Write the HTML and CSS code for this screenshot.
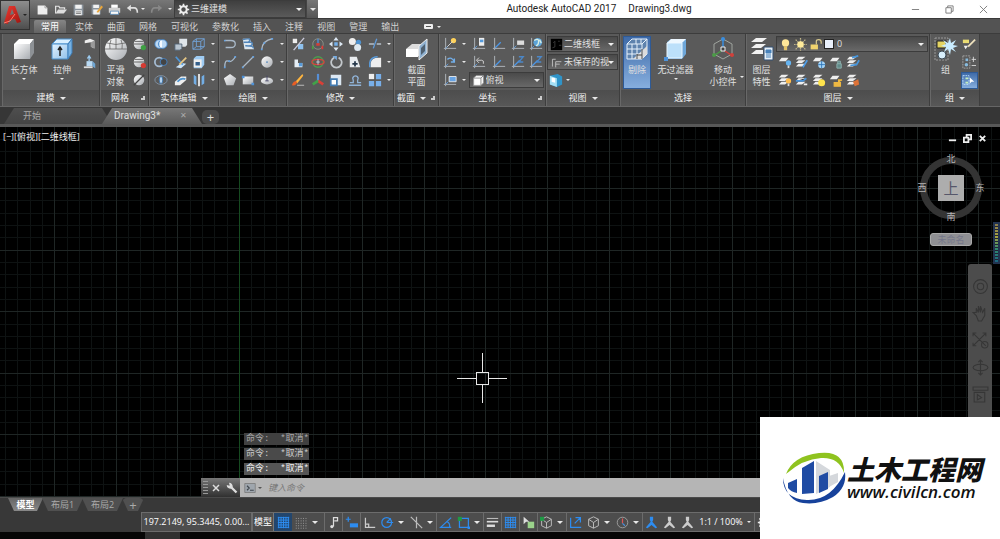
FILE: index.html
```html
<!DOCTYPE html>
<html lang="zh-CN">
  <head>
    <meta charset="UTF-8" />
    <meta name="viewport" content="width=device-width, initial-scale=1.0" />
    <title>Autodesk AutoCAD 2017</title>
    <link rel="stylesheet" href="styles.css">
  </head>
  <body>
    <svg class="defs" width="0" height="0">
      <defs>
        <linearGradient id="gWhite" x1="0" y1="0" x2="1" y2="1"><stop offset="0" stop-color="#fff" /><stop offset="1" stop-color="#a9adb2" /></linearGradient>
        <linearGradient id="gBlue" x1="0" y1="0" x2="1" y2="1"><stop offset="0" stop-color="#e4f3ff" /><stop offset="1" stop-color="#8fc0ea" /></linearGradient>
        <linearGradient id="gRed" x1="0" y1="0" x2="1" y2="1"><stop offset="0" stop-color="#ef3b32" /><stop offset="1" stop-color="#9d1510" /></linearGradient>

        <!-- quick access -->
        <symbol id="new" viewBox="0 0 16 16"><path d="M2 3h9l3 3v8H2z" fill="#eee" /><path d="M11 3v3h3" fill="none" stroke="#999" /></symbol>
        <symbol id="open" viewBox="0 0 16 16"><path d="M2 13V4h4l1 2h6v2" fill="none" stroke="#e4e4e4" stroke-width="1.5" /><path d="M2 13l3-5h11l-4 5z" fill="#ddd" /></symbol>
        <symbol id="save" viewBox="0 0 16 16"><path d="M2 2h12v13H2z" fill="#8b949d" /><path d="M4 2h8v5H4zM4 9h8v6H4z" fill="#f2f2f2" /><path d="M5 11h6M5 13h6" stroke="#666" /></symbol>
        <symbol id="saveas" viewBox="0 0 16 16"><path d="M2 2h11v12H2z" fill="#8b949d" /><path d="M4 2h7v4H4zM4 8h8v6H4z" fill="#f2f2f2" /><path d="M8 11l6-8 2 2-6 7z" fill="#e8a63c" /></symbol>
        <symbol id="print" viewBox="0 0 16 16"><path d="M4 2h8v4H4z" fill="#fff" /><path d="M1 6h14v6H1z" fill="#d0d0d0" /><path d="M3 10h10v4H3z" fill="#f8f8f8" stroke="#5b8cba" /></symbol>
        <symbol id="undo" viewBox="0 0 16 16"><path d="M4 6h6q4 0 4 6" fill="none" stroke="currentColor" stroke-width="2" /><path d="M1 6l5-4v8z" fill="currentColor" /></symbol>
        <symbol id="gear" viewBox="0 0 16 16"><circle cx="8" cy="8" r="4" fill="none" stroke="#eee" stroke-width="2.5" /><path d="M8 1v3M8 12v3M1 8h3M12 8h3M3 3l2 2M11 11l2 2M13 3l-2 2M5 11l-2 2" stroke="#eee" stroke-width="2" /></symbol>

        <!-- solids -->
        <symbol id="box" viewBox="0 0 24 24"><path d="M2 7l5-5h15l-4 5z" fill="#fff" /><path d="M2 7h16v15H2z" fill="url(#gWhite)" /><path d="M18 7l4-5v14l-4 6z" fill="#8d9195" /></symbol>
        <symbol id="extrude" viewBox="0 0 24 24"><path d="M2 7l5-5h15l-4 5z" fill="#d8efff" stroke="#4a90cc" /><path d="M2 7h16v15H2z" fill="url(#gBlue)" stroke="#4a90cc" /><path d="M18 7l4-5v14l-4 6z" fill="#76b1e2" stroke="#3d7db8" /><path d="M10 19V11M8 13l2-3 2 3" fill="none" stroke="#222" stroke-width="1.5" /></symbol>
        <symbol id="polysolid" viewBox="0 0 16 16"><path d="M2 4l6-2 5 2v9l-4-2V6L2 7z" fill="#eee" /><path d="M9 6l4-2v9l-4-2z" fill="#999" /></symbol>
        <symbol id="presspull" viewBox="0 0 16 16"><path d="M4 7h7v6H4z" fill="#b9daf4" /><path d="M11 7l3 3v5l-3-2z" fill="#6fa6d4" /><path d="M1 13h10v2H1z" fill="#ddd" /><path d="M7 7V2M5 4l2-3 2 3" stroke="#9ccbf0" fill="none" stroke-width="1.5" /></symbol>
        <symbol id="sphere" viewBox="0 0 24 24"><circle cx="12" cy="12" r="11" fill="url(#gWhite)" /><path d="M1 12h22M3 6q9 3 18 0M12 1v11M7 3q-2 4-1 9M17 3q2 4 1 9" fill="none" stroke="#666" stroke-width=".8" /></symbol>
        <symbol id="ball" viewBox="0 0 16 16"><circle cx="8" cy="8" r="6" fill="url(#gWhite)" /><path d="M2 8h12M3 5h10" stroke="#555" /></symbol>
        <symbol id="more" viewBox="0 0 16 16"><use href="#ball" /><circle cx="13" cy="12" r="3" fill="#3ea043" /></symbol>
        <symbol id="less" viewBox="0 0 16 16"><use href="#ball" /><circle cx="13" cy="12" r="3" fill="#d43a32" /></symbol>
        <symbol id="refine" viewBox="0 0 16 16"><circle cx="8" cy="8" r="6" fill="url(#gWhite)" /><path d="M2 14L14 2" stroke="#444" stroke-width="1.5" /></symbol>
        <symbol id="union" viewBox="0 0 16 16"><ellipse cx="6" cy="8" rx="5" ry="5" fill="#bdd9f3" stroke="#4687cc" /><ellipse cx="10" cy="8" rx="5" ry="5" fill="#bdd9f3" stroke="#4687cc" /><path d="M8 4v8" stroke="#fff" stroke-width="2" /></symbol>
        <symbol id="subtract" viewBox="0 0 16 16"><circle cx="6" cy="8" r="5" fill="none" stroke="#a4bbd2" stroke-width="2" /><circle cx="11" cy="8" r="4" fill="#444" stroke="#4687cc" /></symbol>
        <symbol id="intersect" viewBox="0 0 16 16"><ellipse cx="8" cy="8" rx="7" ry="5" fill="none" stroke="#8397ab" /><ellipse cx="8" cy="8" rx="2" ry="4" fill="#b6d3ef" stroke="#3c73ac" /></symbol>
        <symbol id="slabs" viewBox="0 0 16 16"><path d="M6 2h9v7l-2 2H6z" fill="#dfe5ea" /><path d="M1 8h8v5l-2 2H1z" fill="#b8c4cf" stroke="#4e6072" /></symbol>
        <symbol id="slice" viewBox="0 0 16 16"><path d="M2 14l7-5 5 1-6 5z" fill="#c9e3fa" /><path d="M2 2l8 9" stroke="#4d94d6" stroke-width="2" /><path d="M14 3L6 11" stroke="#e4c583" stroke-width="2" /></symbol>
        <symbol id="eraserb" viewBox="0 0 16 16"><path d="M1 10l7-6h6v4l-7 6H1z" fill="#eee" /><path d="M4 10q4-5 9-3" stroke="#4e94d0" stroke-width="2" fill="none" /></symbol>
        <symbol id="wirebox" viewBox="0 0 16 16"><path d="M1 5h9v9H1zM5 2h9v9H5zM1 5l4-3M10 5l4-3M1 14l4-3M10 14l4-3" fill="none" stroke="#72a5dc" /></symbol>
        <symbol id="shell" viewBox="0 0 16 16"><path d="M2 4l3-3h9v10l-3 4H2z" fill="#9ecbf2" /><path d="M2 5h9v9H2z" fill="#eee" /><path d="M4 8h5v4H4z" fill="#335f8c" /></symbol>
        <symbol id="mirror3" viewBox="0 0 16 16"><path d="M2 2l3 2v10l-3-2zM14 2l-3 2v10l3-2z" fill="#73aee5" /><path d="M8 1v14" stroke="#eee" stroke-width="2" /></symbol>

        <!-- drawing -->
        <symbol id="pline" viewBox="0 0 16 16"><path d="M2 4h7q5 0 5 4t-5 4H3" fill="none" stroke="#a9b9c9" stroke-width="1.5" /><circle cx="2" cy="4" r="1" fill="#63a0e0" /></symbol>
        <symbol id="spline" viewBox="0 0 16 16"><path d="M2 14Q2 5 6 7t8-5" fill="none" stroke="#a9b9c9" stroke-width="1.5" /><path d="M1 13h2v2H1zM13 1h2v2h-2zM6 6h2v2H6z" fill="#63a0e0" /></symbol>
        <symbol id="polygon" viewBox="0 0 16 16"><path d="M8 1l7 5-3 8H4L1 6z" fill="url(#gWhite)" /></symbol>
        <symbol id="helix" viewBox="0 0 16 16"><path d="M2 2h8l5 12H4z" fill="#dce7f0" /><path d="M2 3q9-2 8 1t-7 2q11-1 10 2t-8 2q10 0 9 3" fill="none" stroke="#5286ba" stroke-width="1.5" /></symbol>
        <symbol id="line" viewBox="0 0 16 16"><path d="M2 14L14 2" stroke="#adb9c5" stroke-width="1.5" /><path d="M1 13h2v2H1zM13 1h2v2h-2z" fill="#63a0e0" /></symbol>
        <symbol id="rect" viewBox="0 0 16 16"><path d="M2 4h12v9H2z" fill="url(#gWhite)" /><path d="M1 3h3v3H1zM12 11h3v3h-3z" fill="#4e92d8" /></symbol>
        <symbol id="arc" viewBox="0 0 16 16"><path d="M2 14Q3 4 14 2" fill="none" stroke="#adb9c5" stroke-width="1.5" /><path d="M1 13h2v2H1zM4 6h2v2H4zM13 1h2v2h-2z" fill="#63a0e0" /></symbol>
        <symbol id="circle" viewBox="0 0 16 16"><circle cx="8" cy="8" r="6.500" fill="url(#gWhite)" /><circle cx="8" cy="8" r="1" fill="#5487bd" /></symbol>
        <symbol id="ellipse" viewBox="0 0 16 16"><ellipse cx="8" cy="9" rx="7" ry="4" fill="url(#gWhite)" /><path d="M8 3v6M6 9h4" stroke="#446" fill="none" /></symbol>

        <!-- modify -->
        <symbol id="trim3" viewBox="0 0 16 16"><path d="M2 2h5v5H2z" fill="#eee" /><path d="M8 8h6v6H8z" fill="#8ec1ee" /><path d="M3 15L15 1" stroke="#ccd" stroke-width="1.500" /></symbol>
        <symbol id="align" viewBox="0 0 16 16"><path d="M4 5h4v4h5v5H4z" fill="#e6eef5" /><path d="M9 9h4v4H9z" fill="#589cda" /></symbol>
        <symbol id="brush" viewBox="0 0 16 16"><path d="M5 10l8-9 1 2-7 9z" fill="#ffb53e" /><path d="M1 14q2-6 6-4-1 5-6 4z" fill="#e85e25" /><path d="M7 14h8" stroke="#c8c8c8" /></symbol>
        <symbol id="move3" viewBox="0 0 16 16"><circle cx="8" cy="8" r="6" fill="none" stroke="#8f948c" /><path d="M8 8V2" stroke="#4d91e0" stroke-width="1.500" /><path d="M13 10v4" stroke="#e33934" stroke-width="2" /><path d="M2 10v4" stroke="#4a9e43" stroke-width="2" /><path d="M6 7h4v3H6z" fill="#d33f38" /></symbol>
        <symbol id="rot3" viewBox="0 0 16 16"><circle cx="8" cy="8" r="6" fill="none" stroke="#4b9f4e" stroke-width="1.500" /><ellipse cx="8" cy="8" rx="7" ry="3" fill="none" stroke="#d4453e" stroke-width="1.500" /><path d="M8 5v6M6 8h4" stroke="#cfd8e8" /></symbol>
        <symbol id="scale3" viewBox="0 0 16 16"><path d="M8 9V1" stroke="#568fd6" stroke-width="2.500" /><path d="M8 9l6 4" stroke="#d94037" stroke-width="3" /><path d="M8 9l-6 4" stroke="#42a24a" stroke-width="3" /></symbol>
        <symbol id="move" viewBox="0 0 16 16"><path d="M8 0l3 4H5zM8 16l3-4H5zM0 8l4-3v6zM16 8l-4-3v6z" fill="#dce7f2" /><path d="M6 6h4v4H6z" fill="#75b0ea" /></symbol>
        <symbol id="rotate" viewBox="0 0 16 16"><path d="M6 3a6 6 0 1 0 5 0" fill="none" stroke="#c3c8cc" stroke-width="2" /><path d="M4 1h5v5z" fill="#79aee2" /></symbol>
        <symbol id="scale" viewBox="0 0 16 16"><path d="M2 2h12v12H2z" fill="#dce8f3" /><path d="M2 7h7v7H2z" fill="#fff" stroke="#437bb1" stroke-width="2" /></symbol>
        <symbol id="copy" viewBox="0 0 16 16"><circle cx="5" cy="5" r="4" fill="#eee" /><circle cx="12" cy="6" r="3" fill="#4e92cf" /><circle cx="11" cy="12" r="4" fill="#dde8f0" /></symbol>
        <symbol id="stretch" viewBox="0 0 16 16"><path d="M2 2h8l4 12H2z" fill="#e8ecef" /><path d="M8 7v6M5 10h6" stroke="#26384b" stroke-width="2" /></symbol>
        <symbol id="offset" viewBox="0 0 16 16"><path d="M1 14h14M2 11h4V8a3 3 0 1 1 5 0v3h4" fill="none" stroke="#90b3d7" stroke-width="1.500" /></symbol>
        <symbol id="trim" viewBox="0 0 16 16"><path d="M1 8h6M10 8h5" stroke="#b4bec9" stroke-width="1.500" /><path d="M6 13l4-11" stroke="#609bda" stroke-width="1.500" /></symbol>
        <symbol id="fillet" viewBox="0 0 16 16"><path d="M3 14V9q1-6 9-6h3v11z" fill="#eee" /><path d="M2 14V9q1-7 9-7" fill="none" stroke="#5ba0e3" stroke-width="1.500" /></symbol>
        <symbol id="array" viewBox="0 0 16 16"><path d="M1 1h6v6H1z" fill="#eee" /><path d="M9 1h6v6H9zM1 9h6v6H1zM9 9h6v6H9z" fill="#78afe9" /></symbol>
        <symbol id="section" viewBox="0 0 24 24"><path d="M1 12l6-5h10v12H1z" fill="#ddd" /><path d="M1 12h12v8H1z" fill="#fff" /><path d="M14 9l8-7v14l-8 7z" fill="#8eb0d0" stroke="#eee" /><path d="M16 11l4-4v7l-4 4z" fill="#4f6070" /></symbol>

        <!-- coordinates -->
        <symbol id="axis" viewBox="0 0 16 16"><path d="M3 1v12h12M1 13h2v2" fill="none" stroke="#b8bec4" /><path d="M3 13l3-3" stroke="#5f9fe0" /></symbol>
        <symbol id="axisnew" viewBox="0 0 16 16"><use href="#axis" /><circle cx="12" cy="4" r="3" fill="#ffd25a" /><path d="M5 11l6-6" stroke="#ddd" /></symbol>
        <symbol id="axisrot" viewBox="0 0 16 16"><use href="#axis" /><path d="M5 5q5-4 8 3M13 4v4H9" fill="none" stroke="#72aee9" stroke-width="1.500" /></symbol>
        <symbol id="axisview" viewBox="0 0 16 16"><use href="#axis" /><path d="M7 4h8v6H7z" fill="#68a4e4" stroke="#eee" /></symbol>
        <symbol id="axisdoc" viewBox="0 0 16 16"><use href="#axis" /><path d="M8 1h6v9H8z" fill="#eee" /><path d="M9 3h4v3H9z" fill="#559bdd" /></symbol>
        <symbol id="axisprev" viewBox="0 0 16 16"><use href="#axis" /><path d="M6 6h5q3 0 2 4M8 3L5 6l3 3" fill="none" stroke="#ddd" /></symbol>
        <symbol id="axisz" viewBox="0 0 16 16"><use href="#axis" /><path d="M4 12l6-6" stroke="#4b97e8" stroke-width="1.500" /></symbol>
        <symbol id="axiszz" viewBox="0 0 16 16"><use href="#axisz" /><path d="M9 2h5l-5 6h5" fill="none" stroke="#4b87c8" stroke-width="1.500" /></symbol>
        <symbol id="axisflag" viewBox="0 0 16 16"><use href="#axis" /><path d="M7 4h8v5H7z" fill="#ddd" /></symbol>
        <symbol id="world" viewBox="0 0 16 16"><use href="#axis" /><circle cx="10" cy="6" r="5" fill="#5ba3d9" /><path d="M6 4q5-3 5 1t-3 5M12 3l2 4" stroke="#d8eee4" stroke-width="1.500" fill="none" /></symbol>
        <symbol id="cube" viewBox="0 0 16 16"><path d="M2 5l3-3h9v9l-3 3H2z" fill="#fff" stroke="#999" /><path d="M2 5h9v9M11 5l3-3" stroke="#777" fill="none" /></symbol>
        <symbol id="bluecube" viewBox="0 0 16 16"><path d="M1 3l9-2 5 3v9l-6 3-8-3z" fill="#2f94c9" /><path d="M1 3l8 3v10l-8-3z" fill="#a6e0f5" /><path d="M3 5l4 1v5l-4-1z" fill="#fff" /></symbol>

        <!-- selection -->
        <symbol id="culling" viewBox="0 0 24 24"><path d="M2 7l5-5h15v15l-5 5H2z" fill="#5f83ad" stroke="#e8f2fc" /><path d="M8 22l14-13v8l-5 5z" fill="#dcdcdc" /><path d="M2 7h15v15M17 7l5-5M7 7v15M12 7v15M2 12h15M2 17h15M11 2v5M16 2v5" fill="none" stroke="#e8f2fc" /><path d="M12 17v5M17 12v10M12 18h5" stroke="#444" fill="none" /></symbol>
        <symbol id="filter" viewBox="0 0 24 24"><path d="M3 5l4-3h15v15l-4 5H3z" fill="#6ea7d9" /><path d="M3 6h15v15H3z" fill="#bce0fa" stroke="#e9f6ff" /><path d="M3 6l4-4h15l-4 4z" fill="#eef8ff" /><path d="M0 20h4v4H0z" fill="#4d92d9" /></symbol>
        <symbol id="gizmo" viewBox="0 0 24 24"><path d="M12 2l9 5v10l-9 5-9-5V7z" fill="none" stroke="#9fa49e" /><path d="M12 10V3" stroke="#398ee0" stroke-width="1.500" /><path d="M14 14l6 4" stroke="#d0403a" stroke-width="1.500" /><path d="M10 14l-6 4" stroke="#4c9b48" stroke-width="1.500" /><circle cx="12" cy="2" r="2" fill="#398ee0" /><circle cx="21" cy="18" r="2" fill="#d0403a" /><circle cx="3" cy="18" r="2" fill="#4c9b48" /><path d="M10 10h4v4h-4z" fill="#444" stroke="#eee" /></symbol>

        <!-- layers -->
        <symbol id="stack" viewBox="0 0 16 16"><path d="M4 2h8l-4 3H1zM4 6h8l-4 3H1zM4 10h8l-4 3H1z" fill="#eee" /></symbol>
        <symbol id="sheet" viewBox="0 0 16 16"><path d="M4 3h8l-3 4H1z" fill="#eee" /></symbol>
        <symbol id="layerprops" viewBox="0 0 24 24"><path d="M6 1h11l-5 4H1zM6 7h10l-5 4H1zM6 13h7v4H1z" fill="#f2f2f2" /><path d="M14 10h9v13h-9z" fill="#e6f0f8" stroke="#334f70" /><path d="M16 13h5v3h-5zM16 18h5M16 20h5" fill="#4781ba" stroke="#4781ba" /></symbol>
        <symbol id="lyblue" viewBox="0 0 16 16"><use href="#sheet" /><circle cx="12" cy="9" r="3" fill="#65b4f2" /><path d="M12 12v3" stroke="#ddd" stroke-width="2" /></symbol>
        <symbol id="lyiso" viewBox="0 0 16 16"><use href="#stack" /><path d="M9 14l5-8" stroke="#4d9ce7" stroke-width="2" /></symbol>
        <symbol id="lyfreeze" viewBox="0 0 16 16"><use href="#sheet" /><circle cx="11" cy="11" r="4" fill="#a4d3f6" /><path d="M11 7v8M7 11h8" stroke="#2c73b8" /></symbol>
        <symbol id="lylock" viewBox="0 0 16 16"><use href="#sheet" /><path d="M9 10h5v5H9zM10 10V7h3v3" fill="#618a89" stroke="#91b4b0" /></symbol>
        <symbol id="lymake" viewBox="0 0 16 16"><use href="#stack" /><path d="M5 12l7-1 3-5M7 3l7-2" fill="none" stroke="#4696dd" stroke-width="2" /></symbol>
        <symbol id="lyon" viewBox="0 0 16 16"><use href="#stack" /><circle cx="12" cy="9" r="3" fill="#ffbd4d" /><path d="M12 12v3" stroke="#ddd" stroke-width="2" /></symbol>
        <symbol id="lyuniso" viewBox="0 0 16 16"><use href="#stack" /><path d="M1 9h8l4-3" stroke="#4993d8" stroke-width="2" /><path d="M10 13h4" stroke="#eee" stroke-width="2" /></symbol>
        <symbol id="lythaw" viewBox="0 0 16 16"><use href="#stack" /><circle cx="11" cy="11" r="4" fill="#ffe44d" /></symbol>
        <symbol id="lyunlock" viewBox="0 0 16 16"><use href="#sheet" /><path d="M6 11h7v4H6zM11 11V8h4" fill="#edb843" stroke="#edb843" stroke-width="1.500" /></symbol>
        <symbol id="lymatch" viewBox="0 0 16 16"><use href="#stack" /><path d="M8 10l6-3 1 6-5 2z" fill="#de7338" /></symbol>
        <symbol id="bulb" viewBox="0 0 16 16"><circle cx="8" cy="6" r="4.500" fill="#ffe799" /><path d="M6 10h4v5H6z" fill="#e3c368" /></symbol>
        <symbol id="sun" viewBox="0 0 16 16"><path d="M8 0v16M0 8h16M2 2l12 12M14 2L2 14" stroke="#beb388" stroke-width="1.500" stroke-dasharray="2 1" /><circle cx="8" cy="8" r="4" fill="#ffeb9a" /></symbol>
        <symbol id="unlock" viewBox="0 0 16 16"><path d="M2 8h9v6H2z" fill="#f1d36d" /><path d="M9 8V4q0-2 3-2t3 3v2" fill="none" stroke="#d8c98e" stroke-width="1.500" /></symbol>

        <!-- groups -->
        <symbol id="group" viewBox="0 0 24 24"><path d="M1 1h13v22H1z" fill="none" stroke="#999" stroke-dasharray="2 1" /><path d="M3 4h9v7H3z" fill="#e4d462" stroke="#222" /><circle cx="8" cy="18" r="4" fill="#d8effc" stroke="#3c4a55" /><path d="M16 1l1 5 5-3-3 5 5 1-5 2 3 4-5-3-1 6-2-6-4 3 2-5-5-1 5-2-3-4 5 3z" fill="#c9ecff" /></symbol>
        <symbol id="gedit" viewBox="0 0 16 16"><path d="M1 3h7v4H1z" fill="#eadc73" /><path d="M2 10h5l-3 4z" fill="#eee" /><path d="M7 11l8-8" stroke="#eee1bd" stroke-width="2" /></symbol>
        <symbol id="gadd" viewBox="0 0 16 16"><path d="M1 1h8v14H1z" fill="none" stroke="#aaa" stroke-dasharray="2 1" /><path d="M4 4h3v3H4z" fill="#8bd" /><circle cx="5" cy="11" r="2" fill="#8bd" /><path d="M11 5h5M13 2v6M11 12h5" stroke="#ddd" /></symbol>
        <symbol id="gsel" viewBox="0 0 16 16"><path d="M1 3h7v10H1z" fill="none" stroke="#bfe0ff" stroke-dasharray="2 1" /><path d="M4 5h3v2H4zM4 10h3v2H4z" fill="#c5efbc" /><path d="M9 5v7l2-2h3z" fill="#fff" /></symbol>

        <!-- status bar -->
        <symbol id="sgrid" viewBox="0 0 16 16"><path d="M2 1v14M5 1v14M8 1v14M11 1v14M14 1v14M1 2h14M1 5h14M1 8h14M1 11h14M1 14h14" stroke="currentColor" stroke-width="1.200" /></symbol>
        <symbol id="sdots" viewBox="0 0 16 16"><path d="M1 3h14M1 6h14M1 9h14M1 12h14M1 15h14" stroke="#bbb" stroke-width="1" stroke-dasharray="1 2" /></symbol>
        <symbol id="note" viewBox="0 0 16 16"><path d="M8 13V2h5v4H9" fill="none" stroke="#ddd" stroke-width="1.500" /><circle cx="6" cy="13" r="2" fill="#ddd" /></symbol>
        <symbol id="dyn" viewBox="0 0 16 16"><path d="M4 1v6M1 4h6" stroke="#2d8cf0" stroke-width="1.500" /><path d="M6 9h10v5H6z" fill="#2d8cf0" /></symbol>
        <symbol id="ortho" viewBox="0 0 16 16"><path d="M3 2v12h12M3 10h4v4" fill="none" stroke="#ccc" stroke-width="1.500" /></symbol>
        <symbol id="polar" viewBox="0 0 16 16"><circle cx="7" cy="8" r="6" fill="none" stroke="#2d8cf0" stroke-width="1.500" /><path d="M7 8h8M7 8l5-5" stroke="#2d8cf0" stroke-width="1.500" /></symbol>
        <symbol id="iso" viewBox="0 0 16 16"><path d="M8 1v14M1 1l14 14" stroke="#bbb" stroke-width="1.500" /></symbol>
        <symbol id="angle" viewBox="0 0 16 16"><path d="M15 2L2 14h13M10 7q4 2 3 7" fill="none" stroke="#2d8cf0" stroke-width="1.500" /></symbol>
        <symbol id="osnap" viewBox="0 0 16 16"><path d="M3 3h11v11H3z" fill="none" stroke="#2d8cf0" stroke-width="1.500" /><path d="M1 1h5v5H1z" fill="#1f9a45" /><path d="M13 13h3v3h-3z" fill="#2d8cf0" /></symbol>
        <symbol id="lwt" viewBox="0 0 16 16"><path d="M1 3h14" stroke="#ddd" /><path d="M1 7h14" stroke="#ddd" stroke-width="2" /><path d="M1 12h10" stroke="#ddd" stroke-width="3" /></symbol>
        <symbol id="cycle" viewBox="0 0 16 16"><path d="M7 7h8v8H7z" fill="#9bd38b" /><path d="M2 1v9l3-3h4z" fill="#ddd" /></symbol>
        <symbol id="isocube" viewBox="0 0 16 16"><path d="M8 1l6 3v8l-6 3-6-3V4zM2 4l6 4 6-4M8 8v7" fill="none" stroke="#bbb" stroke-width="1.200" /></symbol>
        <symbol id="osnap3" viewBox="0 0 16 16"><use href="#isocube" /><path d="M0 1h5v5H0z" fill="#1f9a45" /></symbol>
        <symbol id="ducs" viewBox="0 0 16 16"><path d="M2 2v12h13M7 9l7-7M8 2h6v6" fill="none" stroke="#2d8cf0" stroke-width="1.500" /></symbol>
        <symbol id="sgizmo" viewBox="0 0 16 16"><circle cx="8" cy="8" r="6.500" fill="none" stroke="#aaa" /><path d="M8 3v6" stroke="#d55" stroke-width="1.500" /><path d="M8 9l3 3" stroke="#4a8fdd" stroke-width="1.500" /></symbol>
        <symbol id="person" viewBox="0 0 16 16"><path d="M6 1h4v4l-1 2 6 7-2 1-5-4-5 4-2-1 6-7-1-2z" fill="currentColor" /></symbol>

        <!-- navigation -->
        <symbol id="wheel" viewBox="0 0 16 16"><circle cx="8" cy="8" r="6.500" fill="none" stroke="currentColor" /><circle cx="8" cy="8" r="3" fill="none" stroke="currentColor" /></symbol>
        <symbol id="hand" viewBox="0 0 16 16"><path d="M4 10L1 7l3 0V3l2 4V1l2 6V1l2 6 2-4v7l-3 5H6z" fill="none" stroke="currentColor" /></symbol>
        <symbol id="zoomx" viewBox="0 0 16 16"><path d="M1 1l12 12M13 1L1 13M1 4V1h3M10 1h3v3M1 10v3h3" fill="none" stroke="currentColor" /><circle cx="12" cy="12" r="3" fill="none" stroke="currentColor" /></symbol>
        <symbol id="orbit" viewBox="0 0 16 16"><ellipse cx="8" cy="8" rx="7" ry="3" fill="none" stroke="currentColor" /><path d="M8 1v14M6 3l2-2 2 2M6 13l2 2 2-2" fill="none" stroke="currentColor" /></symbol>
        <symbol id="motion" viewBox="0 0 16 16"><path d="M1 1h14v3H1zM2 6h10v9H2zM5 8l4 3-4 2z" fill="none" stroke="currentColor" /></symbol>
      </defs>
    </svg>

    <header class="titlebar">
      <div class="quick">
        <button aria-label="新建"><svg><use href="#new" /></svg></button>
        <button aria-label="打开"><svg><use href="#open" /></svg></button>
        <button aria-label="保存"><svg><use href="#save" /></svg></button>
        <button aria-label="另存为"><svg><use href="#saveas" /></svg></button>
        <button aria-label="打印"><svg><use href="#print" /></svg></button>
        <button aria-label="放弃"><svg><use href="#undo" /></svg></button>
        <i class="arrow"></i>
        <button class="redo" aria-label="重做"><svg><use href="#undo" /></svg></button>
        <i class="arrow"></i>
      </div>
      <div class="drop workspace">
        <svg class="ic"><use href="#gear" /></svg>
        <select aria-label="工作空间"><option>三维建模</option></select>
      </div>
      <button class="customize" aria-label="自定义"><i class="arrow"></i></button>
      <h1 class="title"><span>Autodesk AutoCAD 2017</span><span>Drawing3.dwg</span></h1>
      <div class="window-buttons">
        <button aria-label="最小化"><svg viewBox="0 0 10 10"><path d="M1 5h8" /></svg></button>
        <button aria-label="还原"><svg viewBox="0 0 10 10"><path d="M1 3h6v6H1zM3 3V1h6v6H7" /></svg></button>
        <button aria-label="关闭"><svg viewBox="0 0 10 10"><path d="M1 1l8 8M9 1L1 9" /></svg></button>
      </div>
    </header>

    <button class="app-button" aria-label="应用程序菜单">
      <svg viewBox="0 0 20 22"><path d="M1 19L6 2l6 0 6 16-4 1-2-4-6 1-1 4zM7 11l4-1-2-5z" fill="url(#gRed)" fill-rule="evenodd" /><path d="M1 19l6-2 5-7" fill="none" stroke="#ff7a6c" /></svg>
      <i class="arrow"></i>
    </button>

    <nav class="menu">
      <button class="active">常用</button>
      <button>实体</button>
      <button>曲面</button>
      <button>网格</button>
      <button>可视化</button>
      <button>参数化</button>
      <button>插入</button>
      <button>注释</button>
      <button>视图</button>
      <button>管理</button>
      <button>输出</button>
      <button class="minimize" aria-label="最小化功能区"><i class="pill"></i><i class="arrow"></i></button>
    </nav>

    <main class="ribbon">
      <section class="panel p-model">
        <div class="tools">
          <button class="big"><svg><use href="#box" /></svg>长方体<i class="arrow"></i></button>
          <button class="big"><svg><use href="#extrude" /></svg>拉伸<i class="arrow"></i></button>
          <div class="grid">
            <button aria-label="多段体"><svg><use href="#polysolid" /></svg></button>
            <button aria-label="按住并拖动"><svg><use href="#presspull" /></svg></button>
          </div>
        </div>
        <h2>建模<i class="arrow"></i></h2>
      </section>

      <section class="panel p-mesh">
        <div class="tools">
          <button class="big"><svg><use href="#sphere" /></svg>平滑<br>对象</button>
          <div class="grid">
            <button aria-label="提高平滑度"><svg><use href="#more" /></svg></button>
            <button aria-label="降低平滑度"><svg><use href="#less" /></svg></button>
            <button aria-label="优化网格"><svg><use href="#refine" /></svg></button>
          </div>
        </div>
        <h2>网格<i class="corner"></i></h2>
      </section>

      <section class="panel p-solid">
        <div class="tools grid">
          <button aria-label="并集"><svg><use href="#union" /></svg></button>
          <button aria-label="干涉"><svg><use href="#slabs" /></svg></button>
          <button aria-label="提取边"><svg><use href="#wirebox" /></svg></button>
          <i class="arrow"></i>
          <button aria-label="差集"><svg><use href="#subtract" /></svg></button>
          <button aria-label="剖切"><svg><use href="#slice" /></svg></button>
          <button aria-label="抽壳"><svg><use href="#shell" /></svg></button>
          <i class="arrow"></i>
          <button aria-label="交集"><svg><use href="#intersect" /></svg></button>
          <button aria-label="加厚"><svg><use href="#eraserb" /></svg></button>
          <button aria-label="分割"><svg><use href="#mirror3" /></svg></button>
          <i class="arrow"></i>
        </div>
        <h2>实体编辑<i class="arrow"></i></h2>
      </section>

      <section class="panel p-draw">
        <div class="tools grid">
          <button aria-label="多段线"><svg><use href="#pline" /></svg></button>
          <button aria-label="螺旋"><svg><use href="#helix" /></svg></button>
          <button aria-label="圆弧"><svg><use href="#arc" /></svg></button>
          <i class="arrow"></i>
          <button aria-label="样条曲线"><svg><use href="#spline" /></svg></button>
          <button aria-label="直线"><svg><use href="#line" /></svg></button>
          <button aria-label="圆"><svg><use href="#circle" /></svg></button>
          <i class="arrow"></i>
          <button aria-label="多边形"><svg><use href="#polygon" /></svg></button>
          <button aria-label="矩形"><svg><use href="#rect" /></svg></button>
          <button aria-label="椭圆"><svg><use href="#ellipse" /></svg></button>
          <i class="arrow"></i>
        </div>
        <h2>绘图<i class="arrow"></i></h2>
      </section>

      <section class="panel p-modify">
        <div class="tools grid">
          <button aria-label="三维镜像"><svg><use href="#trim3" /></svg></button>
          <button aria-label="三维移动"><svg><use href="#move3" /></svg></button>
          <button aria-label="移动"><svg><use href="#move" /></svg></button>
          <button aria-label="复制"><svg><use href="#copy" /></svg></button>
          <button aria-label="修剪"><svg><use href="#trim" /></svg></button>
          <i class="arrow"></i>
          <button aria-label="三维对齐"><svg><use href="#align" /></svg></button>
          <button aria-label="三维旋转"><svg><use href="#rot3" /></svg></button>
          <button aria-label="旋转"><svg><use href="#rotate" /></svg></button>
          <button aria-label="拉伸对象"><svg><use href="#stretch" /></svg></button>
          <button aria-label="圆角"><svg><use href="#fillet" /></svg></button>
          <i class="arrow"></i>
          <button aria-label="删除"><svg><use href="#brush" /></svg></button>
          <button aria-label="三维缩放"><svg><use href="#scale3" /></svg></button>
          <button aria-label="缩放"><svg><use href="#scale" /></svg></button>
          <button aria-label="偏移"><svg><use href="#offset" /></svg></button>
          <button aria-label="阵列"><svg><use href="#array" /></svg></button>
          <i class="arrow"></i>
        </div>
        <h2>修改<i class="arrow"></i></h2>
      </section>

      <section class="panel p-section">
        <div class="tools">
          <button class="big"><svg><use href="#section" /></svg>截面<br>平面</button>
        </div>
        <h2>截面<i class="arrow"></i><i class="corner"></i></h2>
      </section>

      <section class="panel p-ucs">
        <div class="tools grid">
          <button aria-label="原点"><svg><use href="#axisnew" /></svg></button>
          <i class="arrow"></i>
          <button aria-label="命名 UCS"><svg><use href="#axisdoc" /></svg></button>
          <button aria-label="Z 轴"><svg><use href="#axisz" /></svg></button>
          <button aria-label="视图 UCS"><svg><use href="#axisflag" /></svg></button>
          <button aria-label="世界"><svg><use href="#world" /></svg></button>
          <button aria-label="绕 X 轴"><svg><use href="#axisrot" /></svg></button>
          <i class="arrow"></i>
          <button aria-label="上一个"><svg><use href="#axisprev" /></svg></button>
          <button aria-label="三点"><svg><use href="#axisz" /></svg></button>
          <button aria-label="面"><svg><use href="#axiszz" /></svg></button>
          <button aria-label="对象"><svg><use href="#axiszz" /></svg></button>
          <button aria-label="显示 UCS"><svg><use href="#axisview" /></svg></button>
          <i class="arrow"></i>
          <div class="drop wide">
            <svg class="ic"><use href="#cube" /></svg>
            <select aria-label="坐标系"><option>俯视</option></select>
          </div>
        </div>
        <h2>坐标<i class="corner"></i></h2>
      </section>

      <section class="panel p-view">
        <div class="tools stack">
          <div class="drop">
            <svg class="ic" viewBox="0 0 16 16"><path d="M1 1h14v14H1z" fill="#000" /><path d="M4 6l2-2v7l-3 1M10 4h2M11 9h3" fill="none" stroke="#444" /></svg>
            <select aria-label="视觉样式"><option>二维线框</option></select>
          </div>
          <div class="drop">
            <svg class="ic" viewBox="0 0 16 16"><path d="M3 13V4h4M7 14V7h7M7 10h5" fill="none" stroke="#ccc" /></svg>
            <select aria-label="视图"><option>未保存的视图</option></select>
          </div>
          <div class="grid">
            <button aria-label="视口"><svg><use href="#bluecube" /></svg></button>
            <i class="arrow"></i>
          </div>
        </div>
        <h2>视图<i class="arrow"></i></h2>
      </section>

      <section class="panel p-select">
        <div class="tools">
          <button class="big on"><svg><use href="#culling" /></svg>剔除</button>
          <button class="big"><svg><use href="#filter" /></svg>无过滤器<i class="arrow"></i></button>
          <button class="big"><svg><use href="#gizmo" /></svg>移动<br>小控件</button>
          <i class="arrow"></i>
        </div>
        <h2>选择</h2>
      </section>

      <section class="panel p-layer">
        <div class="tools">
          <button class="big"><svg><use href="#layerprops" /></svg>图层<br>特性</button>
          <div class="stack">
            <div class="drop layers">
              <svg class="ic"><use href="#bulb" /></svg>
              <svg class="ic"><use href="#sun" /></svg>
              <svg class="ic"><use href="#unlock" /></svg>
              <i class="swatch"></i>
              <select aria-label="图层"><option>0</option></select>
            </div>
            <div class="grid">
              <button aria-label="关闭图层"><svg><use href="#lyblue" /></svg></button>
              <button aria-label="隔离"><svg><use href="#lyiso" /></svg></button>
              <button aria-label="冻结"><svg><use href="#lyfreeze" /></svg></button>
              <button aria-label="锁定"><svg><use href="#lylock" /></svg></button>
              <button aria-label="置为当前"><svg><use href="#lymake" /></svg></button>
              <button aria-label="打开所有图层"><svg><use href="#lyon" /></svg></button>
              <button aria-label="取消隔离"><svg><use href="#lyuniso" /></svg></button>
              <button aria-label="解冻"><svg><use href="#lythaw" /></svg></button>
              <button aria-label="解锁"><svg><use href="#lyunlock" /></svg></button>
              <button aria-label="匹配图层"><svg><use href="#lymatch" /></svg></button>
            </div>
          </div>
        </div>
        <h2>图层<i class="arrow"></i></h2>
      </section>

      <section class="panel p-group">
        <div class="tools">
          <button class="big"><svg><use href="#group" /></svg>组</button>
          <div class="grid">
            <button aria-label="解除编组"><svg><use href="#gedit" /></svg></button>
            <button aria-label="组编辑"><svg><use href="#gadd" /></svg></button>
            <button class="on" aria-label="组选择"><svg><use href="#gsel" /></svg></button>
          </div>
        </div>
        <h2>组<i class="arrow"></i></h2>
      </section>
    </main>

    <nav class="files">
      <button class="file start">开始</button>
      <button class="file current">Drawing3*<span class="x">✕</span></button>
      <button class="plus" aria-label="新图形">+</button>
    </nav>

    <div class="canvas">
      <svg class="lines" id="lines"></svg>
      <div class="view-label">[−][俯视][二维线框]</div>
      <svg class="cursor" viewBox="0 0 52 52"><path d="M26 1v19M26 32v19M1 26h19M32 26h19M20 20h12v12H20z" /></svg>

      <div class="doc-buttons">
        <button aria-label="最小化图形"><svg viewBox="0 0 10 10"><path d="M1 7h8" /></svg></button>
        <button aria-label="还原图形"><svg viewBox="0 0 10 10"><path d="M1 4h5v5H1zM4 3V1h5v5H7" /></svg></button>
        <button aria-label="关闭图形"><svg viewBox="0 0 10 10"><path d="M2 2l6 6M8 2L2 8" /></svg></button>
      </div>

      <div class="viewcube">
        <span class="n">北</span>
        <span class="w">西</span>
        <button class="face">上</button>
        <span class="e">东</span>
        <span class="s">南</span>
      </div>
      <button class="ucs-name">未命名</button>
      <div class="meter"></div>

      <div class="navbar">
        <button aria-label="导航控制盘"><svg><use href="#wheel" /></svg></button>
        <button aria-label="平移"><svg><use href="#hand" /></svg></button>
        <button aria-label="范围缩放"><svg><use href="#zoomx" /></svg></button>
        <button aria-label="动态观察"><svg><use href="#orbit" /></svg></button>
        <button aria-label="运动"><svg><use href="#motion" /></svg></button>
      </div>

      <div class="command">
        <ul>
          <li>命令: &nbsp;*取消*</li>
          <li>命令: &nbsp;*取消*</li>
          <li>命令: &nbsp;*取消*</li>
        </ul>
        <div class="command-line">
          <i class="grip"></i>
          <button aria-label="关闭命令行"><svg viewBox="0 0 16 16"><path d="M4 4l8 8M12 4l-8 8" stroke="#ddd" stroke-width="2" /></svg></button>
          <button aria-label="命令行设置"><svg viewBox="0 0 16 16"><path d="M7 7l7 7" stroke="#ddd" stroke-width="3" /><path d="M4 1l1 4-4-1q0 5 6 5l2-2q0-6-5-6z" fill="#ddd" /></svg></button>
          <label class="prompt" for="cmd"><svg viewBox="0 0 16 16"><path d="M1 2h14v12H1z" fill="#9fa6ad" stroke="#777" /><path d="M4 5l3 3-3 3M8 11h5" fill="none" stroke="#3f464d" stroke-width="1.500" /></svg><i class="arrow"></i></label>
          <input type="text" id="cmd" placeholder="键入命令">
        </div>
      </div>
    </div>

    <nav class="layouts">
      <button class="active">模型</button>
      <button>布局1</button>
      <button>布局2</button>
      <button class="plus" aria-label="新建布局">+</button>
    </nav>

    <footer class="status">
      <button class="coords">197.2149, 95.3445, 0.00...</button>
      <button class="space">模型</button>
      <button class="blue lit" aria-label="栅格"><svg><use href="#sgrid" /></svg></button>
      <button aria-label="捕捉"><svg><use href="#sdots" /></svg></button>
      <i class="arrow"></i>
      <button class="sep" aria-label="推断约束"><svg><use href="#note" /></svg></button>
      <button class="sep" aria-label="动态输入"><svg><use href="#dyn" /></svg></button>
      <button class="sep" aria-label="正交"><svg><use href="#ortho" /></svg></button>
      <button aria-label="极轴"><svg><use href="#polar" /></svg></button>
      <i class="arrow"></i>
      <button aria-label="等轴测"><svg><use href="#iso" /></svg></button>
      <i class="arrow"></i>
      <button class="sep" aria-label="对象捕捉追踪"><svg><use href="#angle" /></svg></button>
      <button aria-label="对象捕捉"><svg><use href="#osnap" /></svg></button>
      <i class="arrow"></i>
      <button class="sep" aria-label="线宽"><svg><use href="#lwt" /></svg></button>
      <button class="sep blue" aria-label="透明度"><svg><use href="#sgrid" /></svg></button>
      <button class="sep" aria-label="选择循环"><svg><use href="#cycle" /></svg></button>
      <button class="sep" aria-label="三维对象捕捉"><svg><use href="#osnap3" /></svg></button>
      <i class="arrow"></i>
      <button class="sep" aria-label="动态 UCS"><svg><use href="#ducs" /></svg></button>
      <button aria-label="选择过滤"><svg><use href="#isocube" /></svg></button>
      <i class="arrow"></i>
      <button aria-label="小控件"><svg><use href="#sgizmo" /></svg></button>
      <i class="arrow"></i>
      <button class="sep blue" aria-label="注释可见性"><svg><use href="#person" /></svg></button>
      <button aria-label="自动缩放"><svg><use href="#person" /></svg></button>
      <button aria-label="注释比例"><svg><use href="#person" /></svg></button>
      <button class="ratio">1:1 / 100%<i class="arrow"></i></button>
      <button class="sep" aria-label="切换工作空间"><svg><use href="#gear" /></svg></button>
    </footer>
    <div class="taskbar"><i></i></div>

    <aside class="brand">
      <svg viewBox="0 0 66 54">
        <path d="M5 23Q12 5 38 2t25 20Q58 6 40 7T5 23z" fill="#8fc31f" />
        <path d="M2 27q0 21 24 22t38-28q2 16-12 25-14 8-30 6T2 27z" fill="#17429b" />
        <path d="M35 10l14 9v17l-14 7zM48 25l9-3v9l-9 5z" fill="#d5d8dc" />
        <path d="M21 17l12-7v32l-12 1z" fill="#1f4ba3" />
        <path d="M7 32l9-4v14q-6-1-9-5zM38 25l9-4v17l-9 4z" fill="#1f4ba3" />
      </svg>
      <div>
        <strong>土木工程网</strong>
        <em>www.civilcn.com</em>
      </div>
    </aside>

    <script src="grid.js"></script>
  </body>
</html>
```

FILE: styles.css
```css
* {
  margin: 0;
  padding: 0;
  box-sizing: border-box;
}
body {
  height: 100vh;
  overflow: hidden;
  display: flex;
  flex-direction: column;
  position: relative;
  background: #383838;
  color: #e0e0e0;
  font-family: "Open Sans", "Noto Sans CJK SC", sans-serif;
  font-size: 9px;
  line-height: 12px;
}
button,
select,
input {
  font: inherit;
  color: inherit;
  background: none;
  border: none;
  outline: none;
}
button {
  display: flex;
  align-items: center;
  justify-content: center;
  white-space: nowrap;
}
svg {
  display: block;
  flex: none;
}
.defs {
  position: absolute;
}
.arrow {
  flex: none;
  width: 0;
  height: 0;
  border: 3px solid transparent;
  border-top-color: #e8e8e8;
  border-bottom: none;
}
.grid .arrow,
.big .arrow,
.tools > .arrow,
.quick .arrow {
  border-width: 2px;
  border-bottom: none;
}

/* title bar */
.titlebar {
  height: 18px;
  flex: none;
  display: flex;
  background: #fff;
  padding-left: 30px;
}
.quick,
.workspace,
.customize {
  background: linear-gradient(#777, #555);
}
.quick {
  display: flex;
  align-items: center;
  padding-left: 3px;
  width: 144px;
}
.quick button {
  width: 18px;
}
.quick svg {
  width: 13px;
  height: 13px;
}
.redo {
  color: #888;
  transform: scaleX(-1);
}
.quick .redo {
  width: 23px;
}
.drop {
  display: flex;
  align-items: center;
  position: relative;
  height: 16px;
  border: 1px solid #3c3c3c;
  background: linear-gradient(#4a4a4a, #686868);
}
.drop .ic {
  width: 13px;
  height: 13px;
  margin-left: 2px;
}
.drop select {
  appearance: none;
  flex: 1;
  min-width: 0;
  height: 14px;
  padding: 0 8px 0 1px;
}
.drop::after {
  content: "";
  position: absolute;
  right: 3px;
  border: 3px solid transparent;
  border-top-color: #eee;
  border-bottom: none;
}
.drop.workspace {
  width: 132px;
  height: 18px;
  background: linear-gradient(#3f3f3f, #5a5a5a);
}
.customize {
  width: 12px;
  border-left: 1px solid #444;
}
.title {
  flex: 1;
  display: flex;
  justify-content: center;
  gap: 12px;
  padding-right: 18px;
  color: #222;
  font-family: Roboto, "Noto Sans CJK SC", sans-serif;
  font-size: 10px;
  font-weight: 400;
  line-height: 18px;
}
.window-buttons {
  display: flex;
}
.window-buttons button {
  width: 34px;
}
.window-buttons svg {
  width: 9px;
  height: 9px;
  fill: none;
  stroke: #777;
}
.app-button {
  position: absolute;
  top: 0;
  left: 0;
  width: 30px;
  height: 30px;
  border: 1px solid #333;
  background: linear-gradient(#8e8e8e, #4e4e4e);
}
.app-button svg {
  width: 20px;
  height: 24px;
}
.app-button .arrow {
  border-width: 2px;
  border-top-color: #222;
  border-bottom: none;
}

/* ribbon tabs */
.menu {
  height: 15px;
  flex: none;
  display: flex;
  align-items: flex-end;
  padding-left: 34px;
  background: #535353;
  border-top: 1px solid #3a3a3a;
}
.menu button {
  height: 13px;
  padding: 0 7px;
  color: #d0d0d0;
}
.menu .active {
  margin-right: 2px;
  color: #fff;
  background: linear-gradient(#858585, #636363);
  border-radius: 2px 2px 0 0;
}
.menu .minimize {
  padding: 0 18px;
  gap: 4px;
}
.pill {
  width: 9px;
  height: 5px;
  border-radius: 1px;
  border: 2px solid #eee;
  background: #555;
}
.minimize .arrow {
  border-width: 2px;
  border-bottom: none;
}

/* ribbon */
.ribbon {
  height: 73px;
  flex: none;
  display: flex;
  padding-left: 2px;
  background: #484848;
  border-top: 1px solid #3c3c3c;
}
.panel {
  flex: none;
  display: flex;
  flex-direction: column;
  background: #5a5a5a;
  border-right: 1px solid #3e3e3e;
  border-left: 1px solid #686868;
}
.tools {
  height: 56px;
  padding-top: 1px;
  display: flex;
}
.panel h2 {
  flex: 1;
  display: flex;
  align-items: center;
  justify-content: center;
  gap: 5px;
  font-size: 9px;
  font-weight: 400;
  color: #eee;
  background: linear-gradient(#4d4d4d, #575757);
  position: relative;
}
.corner {
  position: absolute;
  right: 3px;
  width: 4px;
  height: 4px;
  border-right: 2px solid #ccc;
  border-bottom: 2px solid #ccc;
}
.p-mesh h2 {
  padding-right: 9px;
}
.p-ucs h2 {
  padding-right: 10px;
}
.p-section h2 {
  justify-content: flex-start;
  padding-left: 2px;
}
.big {
  flex-direction: column;
  justify-content: flex-start;
  width: 38px;
  height: 53px;
  margin-top: 1px;
}
.big svg {
  width: 24px;
  height: 24px;
  margin: 1px 0 3px;
}
.big .arrow {
  margin-top: 2px;
}
.grid {
  display: grid;
  grid-auto-rows: 18px;
  align-items: center;
  justify-items: center;
}
.grid svg {
  width: 14px;
  height: 14px;
}
.grid button {
  width: 18px;
  height: 18px;
}
.on {
  background: linear-gradient(#3f6ba8, #86aede);
  border: 1px solid #2e5a96;
}
.stack {
  display: flex;
  flex-direction: column;
}
.stack .drop {
  margin: 1px 0;
}
.p-model {
  width: 98px;
}
.p-model .tools {
  padding-left: 2px;
}
.p-mesh {
  width: 49px;
}
.p-mesh .big {
  width: 29px;
}
.p-solid {
  width: 70px;
}
.p-solid .grid {
  grid-template-columns: 22px 18px 18px 9px;
}
.p-draw {
  width: 68px;
}
.p-draw .grid {
  grid-template-columns: 20px 16px 22px 8px;
}
.p-modify {
  width: 107px;
}
.p-modify .grid {
  grid-template-columns: 20px 20px 16px 22px 18px 9px;
}
.p-section {
  width: 45px;
}
.p-section .big {
  width: 43px;
}
.p-ucs {
  width: 107px;
}
.p-ucs .grid {
  grid-template-columns: 20px 8px 22px 18px 20px 16px;
}
.wide {
  grid-column: 3 / 7;
  width: 75px;
}
.p-view {
  width: 74px;
}
.p-view .drop {
  width: 71px;
}
.p-view .grid {
  grid-template-columns: 18px 6px;
}
.p-select {
  width: 126px;
}
.p-select .tools {
  padding-left: 2px;
}
.p-select .big.on {
  width: 28px;
}
.p-select .big {
  width: 46px;
}
.p-select .big:nth-of-type(2) {
  width: 49px;
}
.p-select .big.on svg {
  margin-top: 0;
}
.p-select .tools > .arrow {
  align-self: center;
  margin-top: 28px;
  margin-left: -6px;
}
.p-layer {
  width: 184px;
}
.p-layer .big {
  width: 29px;
}
.layers {
  width: 152px;
}
.swatch {
  width: 10px;
  height: 10px;
  margin: 0 2px;
  background: #e8effa;
  border: 1px solid #222;
}
.p-layer .grid {
  grid-template-columns: repeat(5, 17px);
}
.p-group {
  width: 50px;
}
.p-group .big {
  width: 29px;
}
.grid .on {
  width: 17px;
  height: 17px;
}

/* drawing tabs */
.files {
  height: 21px;
  flex: none;
  display: flex;
  align-items: flex-end;
  background: #363636;
  border-top: 1px solid #666;
  border-bottom: 3px solid #585858;
}
.file {
  height: 16px;
  justify-content: flex-start;
  position: relative;
  background: linear-gradient(#4e4e4e, #444);
  clip-path: polygon(10px 0, calc(100% - 10px) 0, 100% 100%, 0 100%);
}
.start {
  width: 108px;
  margin-left: 4px;
  padding-left: 19px;
  color: #aaa;
}
.current {
  width: 100px;
  margin-left: -10px;
  padding-left: 12px;
  font-family: Roboto, "Noto Sans CJK SC", sans-serif;
  font-size: 10px;
  background: linear-gradient(#777, #5a5a5a);
}
.x {
  margin-left: 20px;
  color: #aaa;
  font-size: 8px;
}
.plus {
  width: 17px;
  height: 14px;
  font-size: 13px;
  background: #4a4a4a;
  border-radius: 5px;
}

/* drawing area */
.canvas {
  flex: 1;
  min-height: 0;
  position: relative;
  overflow: hidden;
  background: #000;
}
.lines {
  width: 100%;
  height: 100%;
}
.view-label {
  position: absolute;
  top: 4px;
  left: 3px;
  color: #eee;
}
.cursor {
  position: absolute;
  left: 456px;
  top: 225px;
  width: 52px;
  height: 52px;
  fill: none;
  stroke: #e8e8e8;
  shape-rendering: crispEdges;
}
.doc-buttons {
  position: absolute;
  top: 7px;
  right: 10px;
  display: flex;
}
.doc-buttons button {
  width: 15px;
}
.doc-buttons svg {
  width: 9px;
  height: 9px;
  fill: none;
  stroke: #eee;
  stroke-width: 2;
}
.viewcube {
  position: absolute;
  top: 26px;
  right: 14px;
  width: 70px;
  height: 70px;
  display: grid;
  grid-template: 12px 1fr 12px / 12px 1fr 12px;
  align-items: center;
  justify-items: center;
  color: #b5b5b5;
}
.viewcube::before {
  content: "";
  position: absolute;
  inset: 4px;
  border: 7px solid #343434;
  border-radius: 50%;
}
.viewcube span,
.viewcube .face {
  position: relative;
}
.n,
.s {
  grid-column: 2;
}
.w,
.e,
.face {
  grid-row: 2;
}
.w {
  grid-column: 1;
}
.e {
  grid-column: 3;
}
.face {
  width: 26px;
  height: 26px;
  color: #56576a;
  font-size: 15px;
  background: #adadad;
}
.ucs-name {
  position: absolute;
  top: 106px;
  right: 28px;
  width: 42px;
  height: 13px;
  color: #74768a;
  background: #8f8f93;
  border: 1px solid #aaa;
  border-radius: 3px;
}
.meter {
  position: absolute;
  top: 95px;
  right: 0;
  width: 7px;
  height: 42px;
  border: 2px solid #223350;
  background: repeating-linear-gradient(transparent 0 2px, #223 2px 3px), linear-gradient(#8a7a4c, #a5a541, #2e8a70, #1c6681);
}
.navbar {
  position: absolute;
  top: 137px;
  right: 8px;
  bottom: 0;
  width: 24px;
  padding-top: 14px;
  display: flex;
  flex-direction: column;
  align-items: center;
  gap: 10px;
  color: #363636;
  background: #4c4c4c;
  border-radius: 3px;
}
.navbar svg {
  width: 17px;
  height: 17px;
}

/* command line */
.command {
  position: absolute;
  left: 201px;
  right: 240px;
  bottom: 0;
}
.command ul {
  list-style: none;
  width: 65px;
  margin: 0 0 3px 43px;
  display: flex;
  flex-direction: column;
  gap: 3px;
  font-family: "Liberation Mono", "Noto Sans CJK SC", monospace;
}
.command li {
  padding-left: 2px;
  color: #f0f0f0;
  background: #555;
  white-space: nowrap;
}
.command li:nth-child(1) {
  color: #aaa;
  background: #404040;
}
.command li:nth-child(2) {
  color: #ccc;
  background: #4a4a4a;
}
.command-line {
  height: 19px;
  display: flex;
  align-items: center;
  background: linear-gradient(#777, #303030);
}
.grip {
  width: 5px;
  height: 13px;
  margin-left: 2px;
  background: repeating-linear-gradient(#999 0 1px, transparent 1px 3px);
}
.command-line button {
  width: 16px;
}
.command-line svg {
  width: 12px;
  height: 12px;
}
.prompt {
  display: flex;
  align-items: center;
  align-self: stretch;
  gap: 2px;
  padding-left: 4px;
  background: #b5b5b5;
}
.prompt .arrow {
  border-width: 2px;
  border-top-color: #555;
  border-bottom: none;
}
.command-line input {
  flex: 1;
  height: 19px;
  padding-left: 6px;
  background: #b5b5b5;
  color: #333;
  font-style: italic;
}
.command-line input::placeholder {
  color: #777;
}

/* layout tabs */
.layouts {
  height: 15px;
  flex: none;
  display: flex;
  align-items: flex-start;
  padding-left: 8px;
  border-top: 1px solid #4a4a4a;
}
.layouts button {
  width: 41px;
  height: 13px;
  margin-right: -1px;
  color: #aaa;
  background: #505050;
  clip-path: polygon(0 0, 100% 0, calc(100% - 6px) 100%, 6px 100%);
}
.layouts .active {
  width: 35px;
  color: #fff;
  font-weight: 700;
  background: linear-gradient(#656565, #888);
}
.layouts .plus {
  width: 22px;
}

/* status bar */
.status {
  height: 20px;
  flex: none;
  display: flex;
  margin-left: 141px;
  background: #4d4d4d;
  border: 1px solid #6c6c6c;
}
.status button {
  flex: none;
  width: 18px;
  color: #ccc;
}
.status svg {
  width: 13px;
  height: 13px;
}
.status > .arrow {
  align-self: center;
  margin: 0 3px 0 2px;
}
.status .sep {
  border-left: 1px solid #6c6c6c;
}
.status .coords {
  width: 111px;
  color: #fff;
  border-right: 2px solid #6c6c6c;
}
.status .space {
  width: 21px;
  color: #fff;
  border-right: 1px solid #777;
}
.status .blue {
  color: #2d8cf0;
}
.status .lit {
  background: #23466d;
}
.status .lit + button + .arrow {
  margin-right: 6px;
}
.status .ratio {
  width: 58px;
  gap: 4px;
  color: #fff;
}
.ratio .arrow {
  border-width: 2px;
  border-bottom: none;
}
.taskbar {
  height: 7px;
  flex: none;
  padding-left: 145px;
  background: #060606;
}
.taskbar i {
  display: block;
  width: 35px;
  height: 7px;
  background: #303030;
}

/* site mark */
.brand {
  position: absolute;
  right: 0;
  bottom: 0;
  width: 240px;
  height: 122px;
  display: flex;
  align-items: center;
  padding-left: 21px;
  color: #111;
  background: #fff;
}
.brand svg {
  width: 66px;
  height: 54px;
}
.brand strong,
.brand em {
  display: block;
  white-space: nowrap;
}
.brand strong {
  font: italic 900 27px/28px "Noto Sans CJK SC", sans-serif;
}
.brand em {
  font-size: 17px;
  font-weight: 600;
  line-height: 18px;
}
```

FILE: grid.js
```js
const svg = document.getElementById("lines");
const step = 12.32;
const origin = { x: 239, y: 61 };

function addLine(x1, y1, x2, y2, color) {
  const line = document.createElementNS("http://www.w3.org/2000/svg", "path");
  line.setAttribute("d", `M${x1} ${y1}L${x2} ${y2}`);
  line.setAttribute("stroke", color);
  svg.appendChild(line);
}

function drawGrid() {
  const { width, height } = svg.getBoundingClientRect();
  svg.replaceChildren();
  for (const major of [false, true]) {
    const color = major ? "#1f2625" : "#0e1212";
    for (let i = -100; i < 300; i++) {
      if ((i % 5 === 0) !== major) continue;
      const x = Math.round(origin.x + i * step) + 0.5;
      const y = Math.round(origin.y + i * step) + 0.5;
      if (x > 0 && x < width) addLine(x, 0, x, height, color);
      if (y > 0 && y < height) addLine(0, y, width, y, color);
    }
  }
  addLine(origin.x + 0.5, 0, origin.x + 0.5, height, "#164a20");
}

drawGrid();
window.addEventListener("resize", drawGrid);
```
